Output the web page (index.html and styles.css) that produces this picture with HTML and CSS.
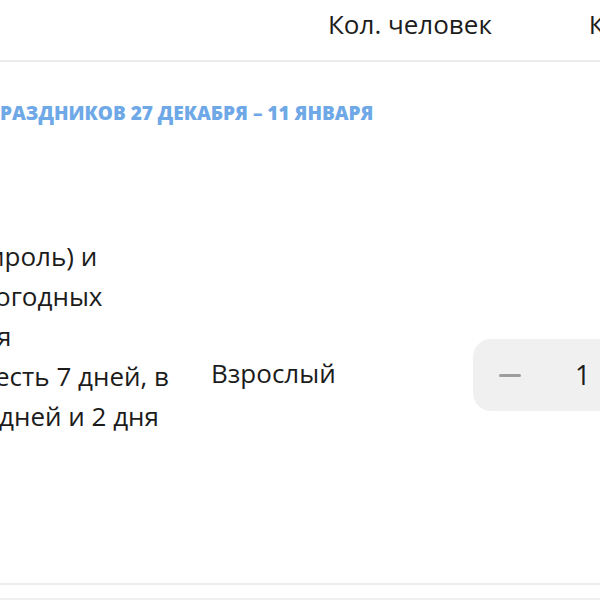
FILE: index.html
```html
<!DOCTYPE html>
<html lang="ru">
<head>
<meta charset="utf-8">
<link rel="stylesheet" href="styles.css">
</head>
<body>
<div class="page">
  <div class="head">
    <div class="head-col head-people">Кол. человек</div>
    <div class="head-col head-next">К</div>
  </div>
  <div class="section-title">РАЗДНИКОВ 27 ДЕКАБРЯ – 11 ЯНВАРЯ</div>
  <div class="row">
    <div class="desc">
      <div class="line l1">ироль) и</div>
      <div class="line l2">огодных</div>
      <div class="line l3">я</div>
      <div class="line l4">есть 7 дней, в</div>
      <div class="line l5">дней и 2 дня</div>
    </div>
    <div class="type">Взрослый</div>
    <div class="stepper">
      <span class="minus"></span>
      <span class="count">1</span>
    </div>
  </div>
  <div class="sep"></div>
  <div class="sep2"></div>
</div>
</body>
</html>
```
FILE: styles.css
```css
html, body {
  margin: 0;
  padding: 0;
  background: #ffffff;
}
body {
  font-family: "Open Sans", "Noto Sans", sans-serif;
  color: #1c1c1c;
  width: 600px;
  height: 600px;
  overflow: hidden;
}
.page {
  width: 600px;
  overflow: hidden;
}
.head {
  display: flex;
  height: 60px;
  border-bottom: 2px solid #ececec;
  align-items: flex-start;
  overflow: hidden;
}
.head-col {
  font-size: 26px;
  line-height: 30px;
  padding-top: 9px;
  white-space: nowrap;
}
.head-people {
  margin-left: 328px;
}
.head-next {
  margin-left: 97px;
}
.section-title {
  margin-top: 40px;
  font-size: 19px;
  font-weight: 800;
  line-height: 22px;
  color: #6ea8e6;
  white-space: nowrap;
}
.row {
  display: flex;
  align-items: flex-start;
  height: 459px;
}
.desc {
  width: 211px;
  flex-shrink: 0;
  padding-top: 112px;
  font-size: 26px;
  line-height: 40px;
  white-space: nowrap;
}
.line.l1 { margin-left: -12px; }
.line.l2 { margin-left: -5px; }
.line.l3 { margin-left: -3px; }
.line.l4 { margin-left: -5px; }
.line.l5 { margin-left: -1px; }
.type {
  margin-top: 234px;
  font-size: 26px;
  line-height: 30px;
  width: 262px;
  flex-shrink: 0;
}
.stepper {
  margin-top: 215px;
  width: 127px;
  height: 72px;
  border-radius: 18px 0 0 18px;
  background: #f0f0f0;
  display: flex;
  align-items: center;
  flex-shrink: 0;
}
.minus {
  display: block;
  width: 22px;
  height: 3px;
  border-radius: 2px;
  background: #9c9c9c;
  margin-left: 26px;
}
.count {
  margin-left: 54px;
  font-size: 27px;
  line-height: 30px;
  color: #1c1c1c;
}
.sep {
  height: 2px;
  background: #ececec;
}
.sep2 {
  margin-top: 13px;
  height: 2px;
  background: #efefef;
}
```
